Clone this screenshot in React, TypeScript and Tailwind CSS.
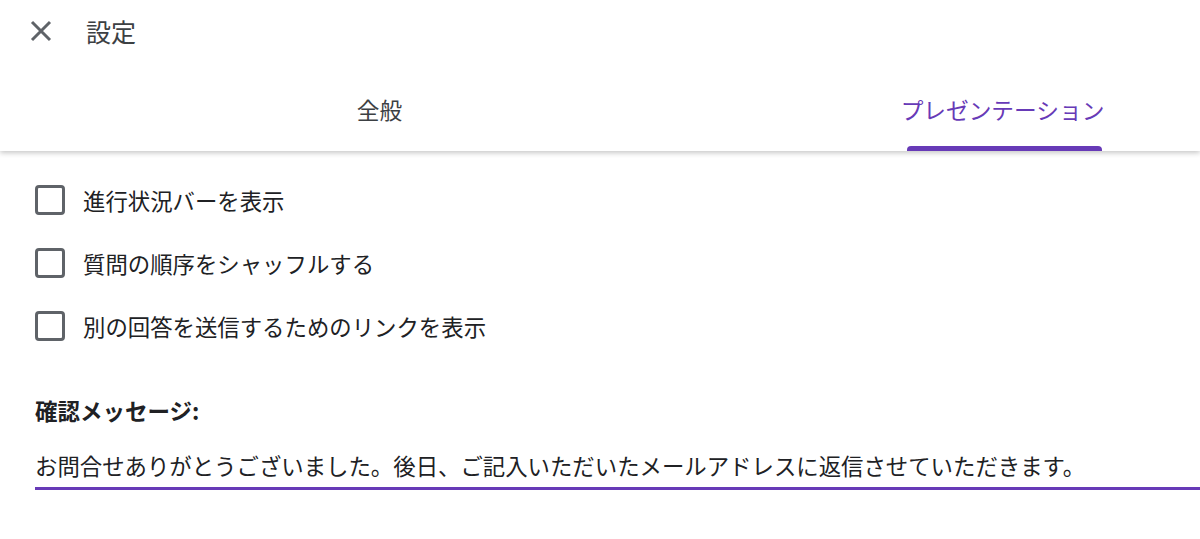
import React from "react";

const font = { fontFamily: '"Noto Sans CJK JP", "Noto Sans", sans-serif' };

function Checkbox({ label }: { label: string }) {
  return (
    <div className="flex h-[63px] items-center">
      <div className="ml-[35px] h-[30px] w-[30px] shrink-0 rounded-[4px] border-[3px] border-[#5f6368]" />
      <span className="ml-[18px] text-[22.4px] leading-[30px] text-[#202124]">{label}</span>
    </div>
  );
}

export default function App() {
  return (
    <div className="relative h-[539px] w-[1200px] overflow-hidden bg-white" style={font}>
      <div className="relative z-10 bg-white shadow-[0_2px_5px_rgba(0,0,0,0.22)]">
        <div className="flex h-[62px] items-center">
          <svg className="ml-[29px] h-[24px] w-[24px] shrink-0" viewBox="0 0 24 24" fill="none">
            <path d="M3 3L21 21M21 3L3 21" stroke="#5f6368" strokeWidth="3" />
          </svg>
          <span className="ml-[33px] text-[25px] leading-[30px] text-[#3c4043]">設定</span>
        </div>
        <div className="ml-[68px] flex h-[89px]">
          <div className="flex w-[623px] shrink-0 flex-col items-center">
            <div className="mt-[33px] text-[22.7px] leading-[30px] text-[#3c4043]">全般</div>
          </div>
          <div className="flex w-[623px] shrink-0 flex-col items-center">
            <div className="mt-[33px] text-[22.7px] leading-[30px] text-[#673ab7]">プレゼンテーション</div>
            <div className="ml-[4px] mt-auto h-[5px] w-[195px] rounded-t-[4px] bg-[#673ab7]" />
          </div>
        </div>
      </div>
      <div className="pt-[17px]">
        <Checkbox label="進行状況バーを表示" />
        <Checkbox label="質問の順序をシャッフルする" />
        <Checkbox label="別の回答を送信するためのリンクを表示" />
        <div className="ml-[35px] mt-[38px] text-[22.5px] font-bold leading-[30px] text-[#202124]">確認メッセージ:</div>
        <div className="ml-[35px] mt-[25px] border-b-[3px] border-[#673ab7] pb-[7px]">
          <div className="whitespace-nowrap text-[22.4px] leading-[30px] text-[#202124]">
            お問合せありがとうございました。後日、ご記入いただいたメールアドレスに返信させていただきます。
          </div>
        </div>
      </div>
    </div>
  );
}
